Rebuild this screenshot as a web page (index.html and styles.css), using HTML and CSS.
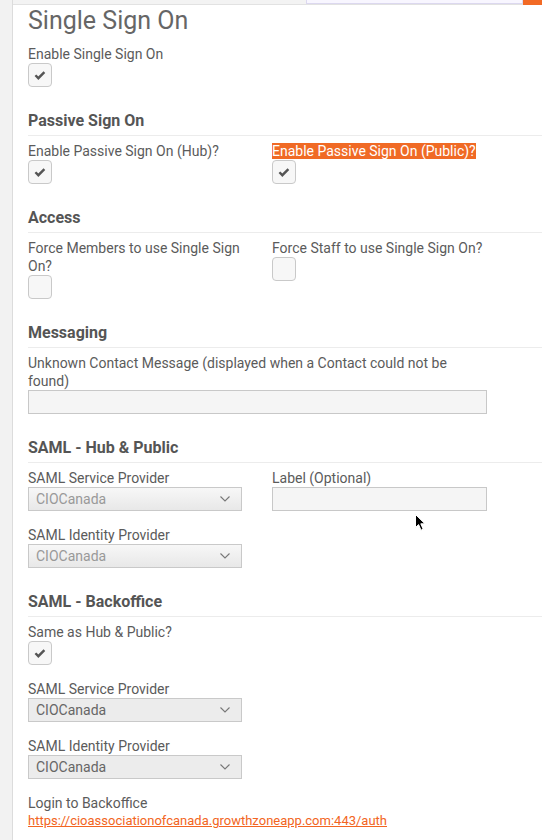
FILE: index.html
```
<!DOCTYPE html>
<html>
<head>
<meta charset="utf-8">
<link rel="stylesheet" href="styles.css">
</head>
<body>
<div class="page">
  <aside class="rail"></aside>
  <div class="main">
    <div class="topbar"><div class="search"></div><div class="accent"></div></div>
    <div class="content">
      <h1 class="title">Single Sign On</h1>
      <div class="field">
        <span class="lbl">Enable Single Sign On</span>
        <span class="check"><svg viewBox="0 0 24 24" width="22" height="22"><path d="M7 12.3 L10.2 15.5 L16.8 8.8" fill="none" stroke="#555" stroke-width="2.6"/></svg></span>
      </div>

      <h2 class="section">Passive Sign On</h2>
      <div class="row">
        <div class="field">
          <span class="lbl">Enable Passive Sign On (Hub)?</span>
          <span class="check"><svg viewBox="0 0 24 24" width="22" height="22"><path d="M7 12.3 L10.2 15.5 L16.8 8.8" fill="none" stroke="#555" stroke-width="2.6"/></svg></span>
        </div>
        <div class="field">
          <span class="lbl"><span class="hl">Enable Passive Sign On (Public)?</span></span>
          <span class="check"><svg viewBox="0 0 24 24" width="22" height="22"><path d="M7 12.3 L10.2 15.5 L16.8 8.8" fill="none" stroke="#555" stroke-width="2.6"/></svg></span>
        </div>
      </div>

      <h2 class="section">Access</h2>
      <div class="row">
        <div class="field">
          <span class="lbl">Force Members to use Single Sign On?</span>
          <span class="check"></span>
        </div>
        <div class="field">
          <span class="lbl">Force Staff to use Single Sign On?</span>
          <span class="check"></span>
        </div>
      </div>

      <h2 class="section">Messaging</h2>
      <div class="field wide">
        <span class="lbl">Unknown Contact Message (displayed when a Contact could not be found)</span>
        <span class="input full"></span>
      </div>

      <h2 class="section">SAML - Hub &amp; Public</h2>
      <div class="row">
        <div class="field">
          <span class="lbl">SAML Service Provider</span>
          <span class="select disabled"><span>CIOCanada</span><svg class="chev" viewBox="0 0 10 6" width="10" height="6"><path d="M0.5 0.5 L5 5 L9.5 0.5" fill="none" stroke="#777" stroke-width="1.1"/></svg></span>
        </div>
        <div class="field">
          <span class="lbl">Label (Optional)</span>
          <span class="input full"></span>
        </div>
      </div>
      <div class="field half">
        <span class="lbl">SAML Identity Provider</span>
        <span class="select disabled"><span>CIOCanada</span><svg class="chev" viewBox="0 0 10 6" width="10" height="6"><path d="M0.5 0.5 L5 5 L9.5 0.5" fill="none" stroke="#777" stroke-width="1.1"/></svg></span>
      </div>

      <h2 class="section">SAML - Backoffice</h2>
      <div class="field">
        <span class="lbl">Same as Hub &amp; Public?</span>
        <span class="check"><svg viewBox="0 0 24 24" width="22" height="22"><path d="M7 12.3 L10.2 15.5 L16.8 8.8" fill="none" stroke="#555" stroke-width="2.6"/></svg></span>
      </div>
      <div class="field half">
        <span class="lbl">SAML Service Provider</span>
        <span class="select"><span>CIOCanada</span><svg class="chev" viewBox="0 0 10 6" width="10" height="6"><path d="M0.5 0.5 L5 5 L9.5 0.5" fill="none" stroke="#777" stroke-width="1.1"/></svg></span>
      </div>
      <div class="field half">
        <span class="lbl">SAML Identity Provider</span>
        <span class="select"><span>CIOCanada</span><svg class="chev" viewBox="0 0 10 6" width="10" height="6"><path d="M0.5 0.5 L5 5 L9.5 0.5" fill="none" stroke="#777" stroke-width="1.1"/></svg></span>
      </div>
      <div class="field">
        <span class="lbl">Login to Backoffice</span>
        <a class="link" href="#">https://cioassociationofcanada.growthzoneapp.com:443/auth</a>
      </div>
    </div>
  </div>
</div>
<svg class="cursor" viewBox="0 0 12 18" width="12" height="18"><path d="M0.5 0.5 L0.5 13.5 L3.6 10.6 L6 16.2 L8.2 15.2 L5.8 9.8 L10 9.8 Z" fill="#000" stroke="#fff" stroke-width="1"/></svg>
</body>
</html>
```
FILE: styles.css
```
html, body {
  margin: 0;
  padding: 0;
  background: #fff;
}
body {
  font-family: Roboto, "Liberation Sans", sans-serif;
  color: #5b5b5b;
  font-size: 14px;
  width: 542px;
  height: 840px;
  overflow: hidden;
  position: relative;
}
.page {
  display: flex;
  height: 840px;
}
.rail {
  width: 12px;
  flex: none;
  background: #f2f2f2;
  border-right: 1px solid #dcdcdc;
}
.main {
  flex: 1;
  min-width: 0;
}
.topbar {
  height: 4px;
  background: #f3f3f3;
  border-bottom: 1px solid #e2e2e2;
  display: flex;
  justify-content: flex-end;
}
.search {
  width: 215px;
  height: 3px;
  background: #f8f6ff;
  border: 1px solid #dcd8ef;
  border-top: none;
}
.accent {
  width: 19px;
  height: 5px;
  background: #f26a25;
}
.content {
  padding-left: 15px;
  display: flex;
  flex-direction: column;
  align-items: stretch;
}
.title {
  margin: 1px 0 9px;
  font-size: 25px;
  line-height: 30px;
  font-weight: 400;
  color: #666;
}
.section {
  margin: 9px 0 6px;
  font-size: 16px;
  line-height: 20px;
  font-weight: 700;
  color: #555;
  padding-bottom: 4px;
  border-bottom: 1px solid #ececec;
}
.row {
  display: grid;
  grid-template-columns: 214px 215px;
  column-gap: 30px;
  width: 459px;
}
.field {
  display: flex;
  flex-direction: column;
  align-items: flex-start;
  margin-bottom: 15px;
}
.wide { width: 459px; }
.half { width: 214px; }
.lbl {
  display: block;
  line-height: 18px;
  font-size: 14px;
  color: #5b5b5b;
}
.hl {
  background: #f06a25;
  color: #fff;
}
.check {
  box-sizing: border-box;
  width: 24px;
  height: 24px;
  border: 1px solid #c9c9c9;
  border-radius: 4px;
  background: #f7f7f7;
  display: flex;
  align-items: center;
  justify-content: center;
}
.input {
  box-sizing: border-box;
  height: 24px;
  border: 1px solid #c8c8c8;
  background: #f5f5f5;
}
.full { align-self: stretch; }
.select {
  box-sizing: border-box;
  align-self: stretch;
  height: 24px;
  border: 1px solid #c9c9c9;
  background: #ececec;
  color: #666;
  display: flex;
  align-items: center;
  justify-content: space-between;
  padding: 0 11px 0 7px;
  font-size: 14px;
}
.select.disabled {
  background: linear-gradient(#f7f7f7, #e8e8e8);
  color: #999;
}
.chev { display: block; }
.link {
  color: #f26522;
  text-decoration: underline;
  line-height: 18px;
  font-size: 13px;
}
.cursor {
  position: absolute;
  left: 415px;
  top: 514px;
}
```
